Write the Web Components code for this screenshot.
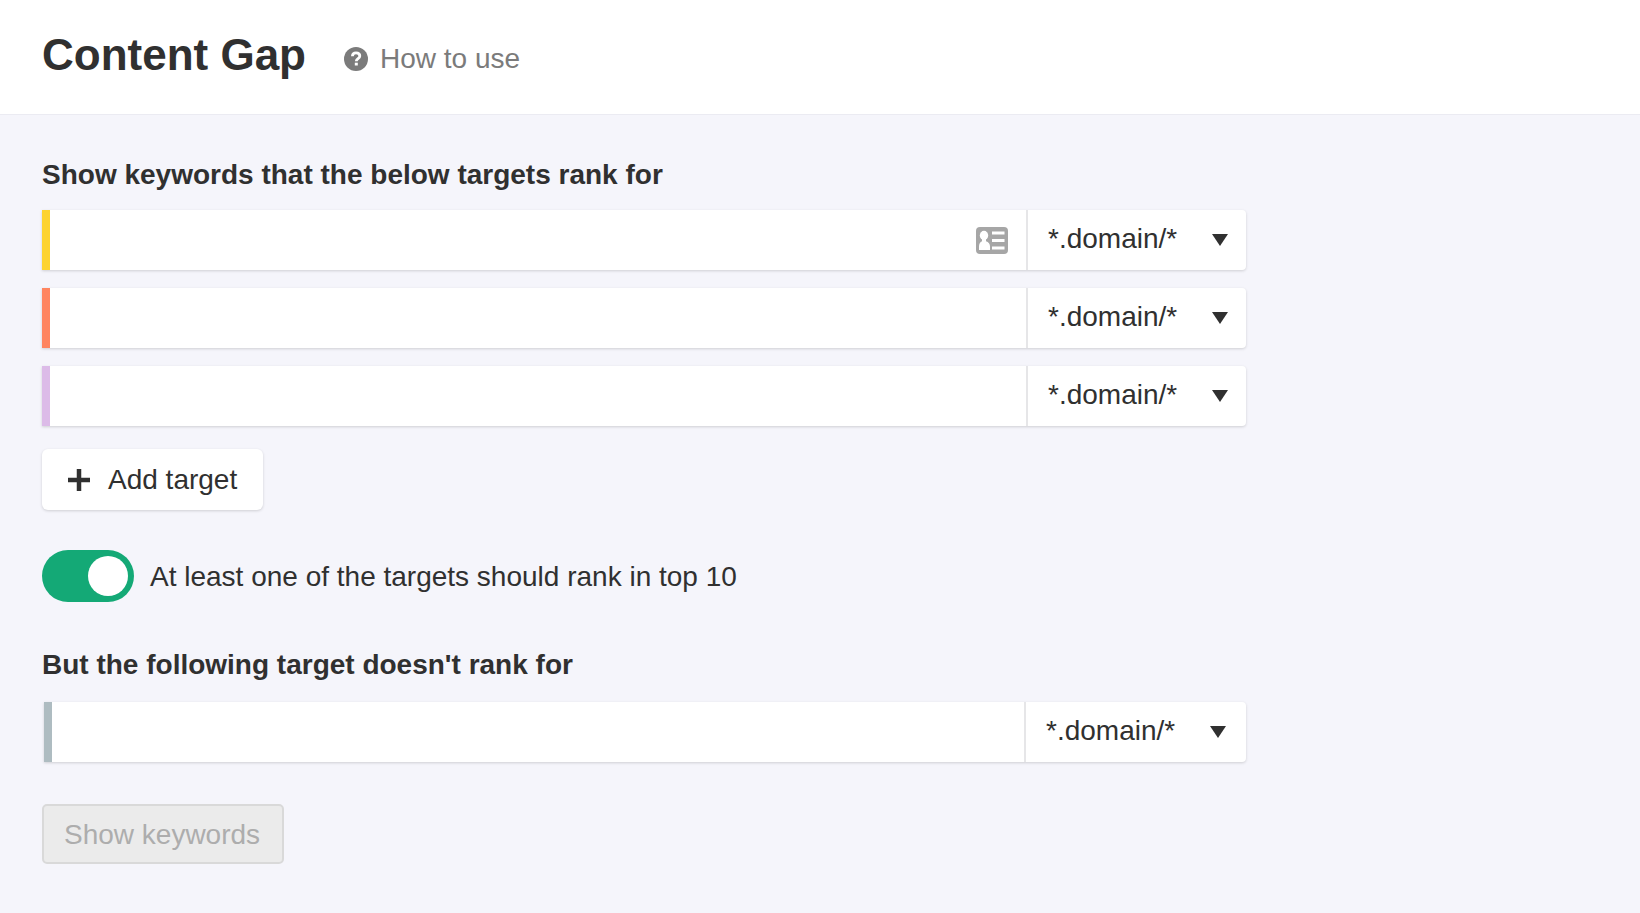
<!DOCTYPE html>
<html lang="en">
<head>
<meta charset="utf-8">
<meta name="viewport" content="width=device-width, initial-scale=1">
<title>Content Gap</title>
<style>
  body {
    margin: 0;
    min-height: 100vh;
    background: #f5f5fb;
    color: #303030;
    font: 28px/32px "Liberation Sans", Arial, sans-serif;
  }
</style>
</head>
<body>
<content-gap-page></content-gap-page>

<script>
const define = (name, html, setup) => {
  const template = document.createElement('template');
  template.innerHTML = html;
  customElements.define(name, class extends HTMLElement {
    constructor() {
      super();
      this.attachShadow({ mode: 'open' }).append(template.content.cloneNode(true));
    }
    connectedCallback() {
      if (setup) setup(this, this.shadowRoot);
    }
  });
};

define('page-header', `
  <style>
    :host { display: block; background: #fff; border-bottom: 1px solid #ebebf2; }
    header { display: flex; align-items: center; gap: 38px; padding: 30px 42px 34px; }
    h1 { margin: 0; font-size: 44px; line-height: 50px; font-weight: 700; }
    a { display: flex; align-items: center; gap: 12px; padding-top: 8px; color: #7b7b7b; text-decoration: none; }
    svg { width: 24px; height: 24px; display: block; }
  </style>
  <header>
    <h1><slot></slot></h1>
    <a href="#how-to-use">
      <svg viewBox="0 0 24 24" aria-hidden="true">
        <circle cx="12" cy="12" r="12" fill="#7b7b7b"/>
        <path d="M8.400 9.200C8.500 7 10 5.900 12 5.900c2.200 0 3.800 1.200 3.800 3.100 0 2.700-3.500 2.600-3.500 5.200" fill="none" stroke="#fff" stroke-width="2.800"/>
        <rect x="10.800" y="15.700" width="3" height="2.800" fill="#fff"/>
      </svg>
      <slot name="help"></slot>
    </a>
  </header>`);

define('section-title', `
  <style>
    :host { display: block; }
    h2 { margin: 0; font-size: 28px; line-height: 32px; font-weight: 700; }
  </style>
  <h2><slot></slot></h2>`);

define('contact-icon', `
  <style>
    :host { display: block; width: 32px; height: 27px; }
    svg { display: block; width: 100%; height: 100%; }
  </style>
  <svg viewBox="0 0 32 27" aria-hidden="true">
    <rect width="32" height="27" rx="4" fill="#a6a6a6"/>
    <ellipse cx="8" cy="8.500" rx="4.200" ry="4.700" fill="#fff"/>
    <path d="M6 12h4v2.200c2.600.7 4 2.600 4 5.300V23H3v-3.500c0-2.700 1-4.600 3-5.300z" fill="#fff"/>
    <path d="M16 6h12.500M16 13.500h12.500M16 21h12.500" stroke="#fff" stroke-width="3"/>
  </svg>`);

define('target-row', `
  <style>
    :host { display: block; --mode-width: 220px; --caret-gap: 18px; }
    :host([inset]) { padding-left: 2px; --mode-width: 222px; --caret-gap: 20px; }
    .row {
      display: flex; height: 60px; box-sizing: border-box;
      background: #fff; border-left: 8px solid var(--mark);
      border-radius: 0 4px 4px 0; box-shadow: 0 1px 3px rgba(0, 0, 0, .16);
    }
    .field { flex: 1; min-width: 0; display: flex; align-items: center; padding-right: 18px; }
    input, select {
      appearance: none; border: 0; margin: 0; background: none;
      font: inherit; color: inherit; outline: none; height: 100%;
    }
    input { flex: 1; min-width: 0; padding: 0 16px; }
    .mode {
      display: grid; align-items: center; width: var(--mode-width);
      border-left: 2px solid #e6e6e8; box-sizing: border-box;
    }
    select { grid-area: 1 / 1; width: 100%; padding: 0 48px 2px 20px; cursor: pointer; }
    svg { grid-area: 1 / 1; justify-self: end; margin-right: var(--caret-gap); width: 16px; height: 12px; pointer-events: none; }
  </style>
  <div class="row">
    <div class="field"><input type="text"><slot></slot></div>
    <div class="mode">
      <select><option>*.domain/*</option></select>
      <svg viewBox="0 0 16 12" aria-hidden="true"><path d="M0 0h16L8 12z" fill="#303030"/></svg>
    </div>
  </div>`,
  (host, root) => {
    const label = host.getAttribute('label');
    root.querySelector('input').setAttribute('aria-label', label);
    root.querySelector('select').setAttribute('aria-label', label + ' mode');
  });

define('add-button', `
  <style>
    :host { display: block; }
    button {
      display: flex; align-items: center; gap: 18px; height: 61px; padding: 0 26px;
      border: 0; border-radius: 6px; background: #fff; color: inherit; font: inherit;
      box-shadow: 0 1px 3px rgba(0, 0, 0, .16); cursor: pointer;
    }
    svg { width: 22px; height: 22px; display: block; }
  </style>
  <button type="button">
    <svg viewBox="0 0 22 22" aria-hidden="true"><path d="M11 0v22M0 11h22" stroke="#303030" stroke-width="4.500"/></svg>
    <slot></slot>
  </button>`);

define('toggle-switch', `
  <style>
    :host { display: block; }
    label { display: flex; align-items: center; gap: 16px; }
    input {
      appearance: none; flex: none; margin: 0; width: 92px; height: 52px; padding: 6px;
      box-sizing: border-box; border-radius: 26px; background: #b9b9c0;
      display: flex; cursor: pointer;
    }
    input::before { content: ""; width: 40px; height: 40px; border-radius: 50%; background: #fff; }
    input:checked { background: #14a976; justify-content: flex-end; }
    span { padding-top: 2px; }
  </style>
  <label><input type="checkbox" role="switch" checked><span><slot></slot></span></label>`);

define('submit-button', `
  <style>
    :host { display: block; }
    button {
      height: 60px; padding: 2px 22px 0 20px; border: 2px solid #d9d9d9; border-radius: 5px;
      background: #ebebeb; color: #adadad; font: inherit;
    }
  </style>
  <button type="submit" disabled><slot></slot></button>`);

define('content-gap-page', `
  <style>
    :host { display: block; }
    main { padding: 44px 42px; }
    form { max-width: 1204px; }
    .targets { display: grid; gap: 18px; margin: 19px 0 23px; }
    toggle-switch { margin: 40px 0 47px; }
    .own { margin: 21px 0 42px; }
  </style>
  <page-header>Content Gap<span slot="help">How to use</span></page-header>
  <main>
    <form>
      <section-title>Show keywords that the below targets rank for</section-title>
      <div class="targets">
        <target-row label="Target 1" style="--mark: #fdd32f"><contact-icon></contact-icon></target-row>
        <target-row label="Target 2" style="--mark: #ff8560"></target-row>
        <target-row label="Target 3" style="--mark: #dcbbe8"></target-row>
      </div>
      <add-button>Add target</add-button>
      <toggle-switch>At least one of the targets should rank in top 10</toggle-switch>
      <section-title>But the following target doesn't rank for</section-title>
      <target-row class="own" inset label="Excluded target" style="--mark: #aebcc1"></target-row>
      <submit-button>Show keywords</submit-button>
    </form>
  </main>`);
</script>
</body>
</html>
